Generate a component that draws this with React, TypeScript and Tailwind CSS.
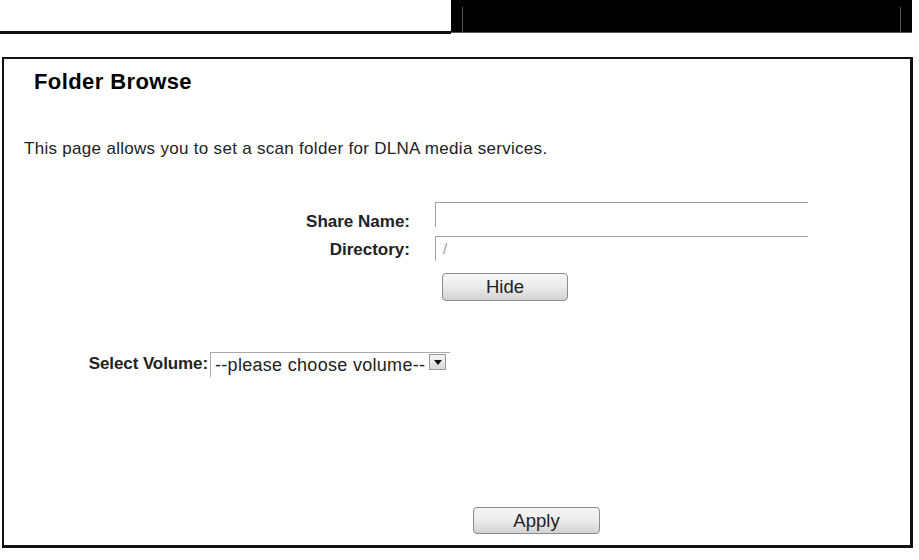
import React from "react";

export default function App() {
  return (
    <div className="w-[919px] h-[560px] bg-white font-['Liberation_Sans',Arial,sans-serif] text-[#1a1a1a] overflow-hidden">
      {/* Header */}
      <div className="flex h-[34px]">
        <div className="w-[451px] h-[34px] border-b-[3px] border-[#111]" />
        <div className="w-[461px] h-[33px] bg-black border-b border-[#555] px-[11px] pt-[7px] flex">
          <div className="flex-1 border-l border-r border-[#555]" />
        </div>
      </div>

      {/* Main box */}
      <div className="mt-[23px] ml-[2px] w-[911px] h-[491px] border-t-2 border-l-2 border-r-[3px] border-b-[3px] border-[#111] flex flex-col">
        <div className="pl-[30px] pt-[11px] h-[24px] leading-[24px] text-[22px] font-bold tracking-[0.4px] text-black box-content">
          Folder Browse
        </div>

        <div className="mt-[45px] pl-[20px] h-[20px] leading-[20px] text-[17px] tracking-[0.3px] text-[#222]">
          This page allows you to set a scan folder for DLNA media services.
        </div>

        {/* Share Name row */}
        <div className="mt-[43px] flex h-[34px]">
          <div className="w-[406px] text-right mt-[10px] h-[20px] leading-[20px] text-[17px] font-bold text-[#222]">
            Share Name:
          </div>
          <div className="ml-[25px] w-[373px] h-[25px] border-t border-l border-[#a2a2a2]" />
        </div>

        {/* Directory row */}
        <div className="flex h-[25px]">
          <div className="w-[406px] text-right mt-[4px] h-[20px] leading-[20px] text-[17px] font-bold text-[#222]">
            Directory:
          </div>
          <div className="ml-[25px] w-[373px] h-[25px] border-t border-l border-[#a2a2a2] pl-[7px] pt-[3px] text-[15px] leading-[18px] text-[#9a9a9a]">
            /
          </div>
        </div>

        {/* Hide button */}
        <div className="mt-[12px] flex">
          <div className="ml-[438px] w-[126px] h-[28px] rounded-[4px] border border-[#8c8c8c] bg-gradient-to-b from-[#f6f6f6] via-[#ebebeb] to-[#d2d2d2] flex items-center justify-center text-[18.5px] text-[#222]">
            Hide
          </div>
        </div>

        {/* Select Volume row */}
        <div className="mt-[51px] flex h-[25px]">
          <div className="w-[204px] text-right pt-[2px] h-[20px] leading-[20px] text-[17px] font-bold text-[#222] tracking-[-0.1px] box-content">
            Select Volume:
          </div>
          <div className="ml-[2px] w-[240px] h-[25px] border-t border-l border-[#a9a9a9] flex items-start">
            <div className="pl-[4px] pt-[2px] h-[20px] leading-[20px] text-[18px] tracking-[0.3px] text-[#222] whitespace-nowrap">
              --please choose volume--
            </div>
            <div className="ml-[4px] mt-[1px] w-[17px] h-[16px] border border-[#9a9a9a] bg-gradient-to-b from-[#f4f4f4] to-[#dadada] flex items-center justify-center">
              <svg width="8" height="5" viewBox="0 0 8 5">
                <path d="M0 0 L8 0 L4 5 Z" fill="#111" />
              </svg>
            </div>
          </div>
        </div>

        {/* Apply button */}
        <div className="mt-[130px] flex">
          <div className="ml-[469px] w-[127px] h-[27px] rounded-[4px] border border-[#8c8c8c] bg-gradient-to-b from-[#f6f6f6] via-[#ebebeb] to-[#d2d2d2] flex items-center justify-center text-[18.5px] text-[#222]">
            Apply
          </div>
        </div>
      </div>
    </div>
  );
}
